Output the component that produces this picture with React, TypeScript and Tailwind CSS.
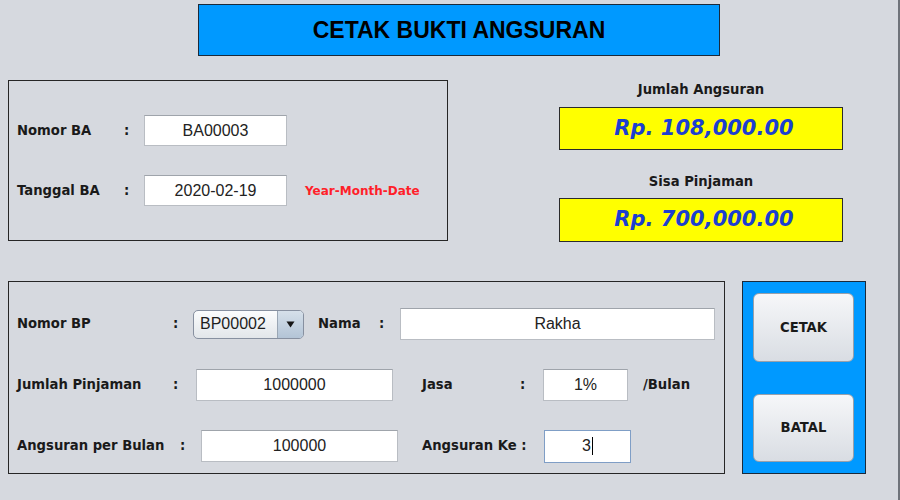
import React from "react";

const lbl = "font-['DejaVu_Sans',sans-serif] font-bold text-[13.2px] text-[#1a1a1a] leading-none whitespace-nowrap";
const inp =
  "h-[31px] bg-white border border-[#b9bdc3] border-t-[#9fa4ab] flex items-center justify-center font-['Liberation_Sans',Arial,sans-serif] text-[16px] text-[#222]";

function Field({ w, children, cls = "" }: { w: string; children?: React.ReactNode; cls?: string }) {
  return <div className={`${inp} ${w} ${cls}`}>{children}</div>;
}

export default function App() {
  return (
    <div className="w-[900px] h-[500px] bg-[#d6d9df] border-r-2 border-[#6f737a] overflow-hidden">
      {/* Title */}
      <div className="pt-[4px] pl-[198px]">
        <div className="w-[522px] h-[52px] bg-[#0099ff] border border-[#1b2a3a] flex items-center justify-center">
          <span className="font-['Liberation_Sans',Arial,sans-serif] font-bold text-[23px] text-black">
            CETAK BUKTI ANGSURAN
          </span>
        </div>
      </div>

      {/* Middle row */}
      <div className="flex mt-[24px]">
        <div className="ml-[8px] w-[440px] h-[161px] border border-[#262626] pl-[8px] pt-[34px]">
          <div className="flex items-center">
            <div className={`${lbl} w-[107px]`}>Nomor BA</div>
            <div className={`${lbl} w-[20px]`}>:</div>
            <Field w="w-[143px]">BA00003</Field>
          </div>
          <div className="flex items-center mt-[29px]">
            <div className={`${lbl} w-[107px]`}>Tanggal BA</div>
            <div className={`${lbl} w-[20px]`}>:</div>
            <Field w="w-[143px]">2020-02-19</Field>
            <div className="ml-[18px] font-['DejaVu_Sans',sans-serif] font-bold text-[12px] text-[#ff1f2a]">
              Year-Month-Date
            </div>
          </div>
        </div>

        <div className="ml-[111px] w-[284px] flex flex-col">
          <div className={`${lbl} text-center h-[27px] pt-[3px]`}>Jumlah Angsuran</div>
          <div className="h-[43px] bg-[#ffff00] border border-[#2b2b2b] flex items-center justify-center">
            <span className="font-['DejaVu_Sans',sans-serif] font-bold italic text-[21px] text-[#1c3fd0] ml-[6px]">
              Rp. 108,000.00
            </span>
          </div>
          <div className={`${lbl} text-center h-[48px] pt-[25px]`}>Sisa Pinjaman</div>
          <div className="h-[44px] bg-[#ffff00] border border-[#2b2b2b] flex items-center justify-center">
            <span className="font-['DejaVu_Sans',sans-serif] font-bold italic text-[21px] text-[#1c3fd0] ml-[6px]">
              Rp. 700,000.00
            </span>
          </div>
        </div>
      </div>

      {/* Bottom row */}
      <div className="flex mt-[39px]">
        <div className="ml-[8px] w-[717px] h-[193px] border border-[#262626] pl-[8px] pt-[26px]">
          {/* Row 1 */}
          <div className="flex items-center h-[32px]">
            <div className={`${lbl} w-[156px]`}>Nomor BP</div>
            <div className={`${lbl} w-[20px]`}>:</div>
            <div className="w-[111px] h-[29px] rounded-[5px] border border-[#8790a0] flex overflow-hidden bg-gradient-to-b from-[#fbfcfd] to-[#e2e6ea]">
              <div className="flex-1 flex items-center pl-[6px] font-['Liberation_Sans',Arial,sans-serif] text-[16px] text-[#1e1e1e]">
                BP00002
              </div>
              <div className="w-[26px] border-l border-[#9aa6b4] bg-gradient-to-b from-[#d6e0ea] to-[#b3c4d6] flex items-center justify-center">
                <svg width="9" height="7" viewBox="0 0 9 7">
                  <path d="M0.5 0.5 L8.5 0.5 L4.5 6.5 Z" fill="#151515" />
                </svg>
              </div>
            </div>
            <div className={`${lbl} ml-[14px] w-[61px]`}>Nama</div>
            <div className={`${lbl} w-[21px]`}>:</div>
            <Field w="w-[315px]" cls="h-[32px]">Rakha</Field>
          </div>
          {/* Row 2 */}
          <div className="flex items-center h-[32px] mt-[29px]">
            <div className={`${lbl} w-[156px]`}>Jumlah Pinjaman</div>
            <div className={`${lbl} w-[23px]`}>:</div>
            <Field w="w-[197px]" cls="h-[32px]">1000000</Field>
            <div className={`${lbl} ml-[29px] w-[98px]`}>Jasa</div>
            <div className={`${lbl} w-[23px]`}>:</div>
            <Field w="w-[85px]" cls="h-[32px]">1%</Field>
            <div className={`${lbl} ml-[15px]`}>/Bulan</div>
          </div>
          {/* Row 3 */}
          <div className="flex items-center h-[32px] mt-[29px]">
            <div className={`${lbl} w-[163px]`}>Angsuran per Bulan</div>
            <div className={`${lbl} w-[21px]`}>:</div>
            <Field w="w-[197px]" cls="h-[32px]">100000</Field>
            <div className={`${lbl} ml-[24px] w-[122px]`}>Angsuran Ke :</div>
            <div className="w-[87px] h-[33px] bg-white border border-[#7f9ec6] flex items-center justify-center font-['Liberation_Sans',Arial,sans-serif] text-[16px] text-[#222]">
              <span>3</span>
              <span className="inline-block w-[1px] h-[18px] bg-black ml-[1px]" />
            </div>
          </div>
        </div>

        <div className="ml-[17px] w-[124px] h-[193px] bg-[#0099ff] border border-[#1b2a3a] pl-[10px] pt-[11px] flex flex-col">
          <button className="w-[101px] h-[69px] rounded-[6px] border border-[#98a0aa] bg-gradient-to-b from-[#f6f7f9] to-[#d9dde3] flex items-center justify-center">
            <span className={lbl}>CETAK</span>
          </button>
          <button className="mt-[32px] w-[101px] h-[68px] rounded-[6px] border border-[#98a0aa] bg-gradient-to-b from-[#f6f7f9] to-[#d9dde3] flex items-center justify-center">
            <span className={lbl}>BATAL</span>
          </button>
        </div>
      </div>
    </div>
  );
}
